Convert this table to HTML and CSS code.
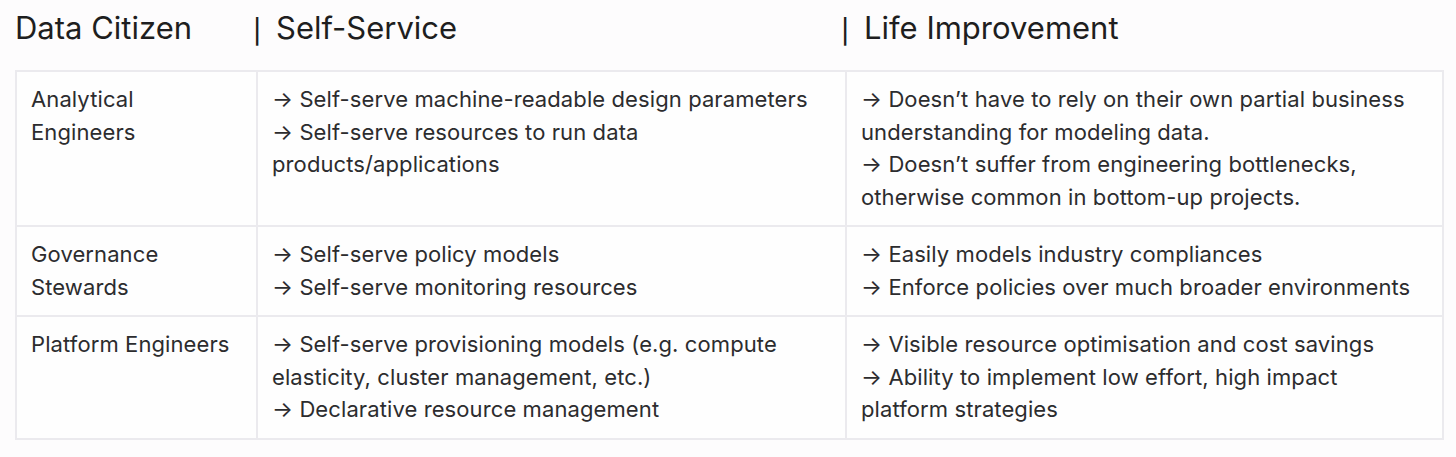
FILE: index.html
```html
<!DOCTYPE html>
<html lang="en">
<head>
<meta charset="utf-8">
<title>Data Citizen</title>
<link rel="stylesheet" href="styles.css">
</head>
<body>
<div class="page">
  <div class="heading">
    <div class="h-col h-col1">Data Citizen</div>
    <div class="h-col h-col2"><span class="pipe">|</span>Self-Service</div>
    <div class="h-col h-col3"><span class="pipe">|</span>Life Improvement</div>
  </div>
  <table class="matrix">
    <colgroup>
      <col class="c1">
      <col class="c2">
      <col class="c3">
    </colgroup>
    <tbody>
      <tr>
        <td>Analytical<br>Engineers</td>
        <td>→ Self-serve machine-readable design parameters<br>→ Self-serve resources to run data<br>products/applications</td>
        <td>→ Doesn’t have to rely on their own partial business understanding for modeling data.<br>→ Doesn’t suffer from engineering bottlenecks, otherwise common in bottom-up projects.</td>
      </tr>
      <tr>
        <td>Governance<br>Stewards</td>
        <td>→ Self-serve policy models<br>→ Self-serve monitoring resources</td>
        <td>→ Easily models industry compliances<br>→ Enforce policies over much broader environments</td>
      </tr>
      <tr>
        <td>Platform Engineers</td>
        <td>→ Self-serve provisioning models (e.g. compute elasticity, cluster management, etc.)<br>→ Declarative resource management</td>
        <td>→ Visible resource optimisation and cost savings<br>→ Ability to implement low effort, high impact platform strategies</td>
      </tr>
    </tbody>
  </table>
</div>
</body>
</html>
```

FILE: styles.css
```css
html, body {
  margin: 0;
  padding: 0;
  background: #fdfcfd;
}

.page {
  padding: 10px 14px 0 15px;
  font-family: Inter, "Liberation Sans", sans-serif;
  color: #2c2c2e;
}

.heading {
  display: flex;
  font-size: 31px;
  line-height: 36px;
  color: #1e1e20;
  height: 60px;
}

.h-col1 {
  width: 238px;
}

.h-col2 {
  width: 588px;
}

.pipe {
  display: inline-block;
  width: 23px;
  font-size: 24px;
  font-weight: 500;
  vertical-align: -1px;
}

.matrix {
  border-collapse: collapse;
  width: 1427px;
  table-layout: fixed;
  font-size: 22px;
  line-height: 32.5px;
  letter-spacing: 0.1px;
}

.c1 { width: 241px; }
.c2 { width: 589px; }
.c3 { width: 597px; }

.matrix td {
  border: 2px solid #ebeaee;
  padding: 11px 18px 12px 14px;
  vertical-align: top;
  background: #fefefe;
}
```
